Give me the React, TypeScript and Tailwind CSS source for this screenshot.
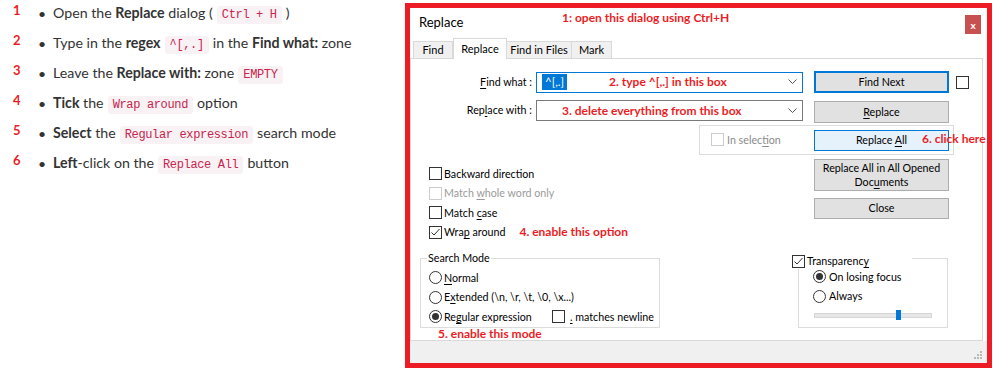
import React from "react";

const red = "font-['Lato',sans-serif] font-bold whitespace-nowrap text-[#ed1c24]";

const Code = ({ children }: { children: React.ReactNode }) => (
    <code className="mx-[4px] rounded-[3px] bg-[#f9f2f4] px-[5px] py-[2px] font-['Liberation_Mono',monospace] text-[12px] tracking-[-0.35px] text-[#c7254e]">
        {children}
    </code>
);

const U = ({ children }: { children: React.ReactNode }) => (
    <span className="underline underline-offset-[2px]">{children}</span>
);

const Check = ({ checked, disabled }: { checked?: boolean; disabled?: boolean }) => (
    <span
        className={
            disabled
                ? "flex h-[13px] w-[13px] shrink-0 border border-[#cccccc] bg-white"
                : "flex h-[13px] w-[13px] shrink-0 items-center justify-center border border-[#333333] bg-white"
        }
    >
        {checked && (
            <svg width="11" height="11" viewBox="0 0 11 11">
                <path d="M1.5 5.5 L4 8 L9.5 2" fill="none" stroke="#333333" strokeWidth="1" />
            </svg>
        )}
    </span>
);

const Radio = ({ checked }: { checked?: boolean }) => (
    <span className="flex h-[13px] w-[13px] shrink-0 items-center justify-center rounded-full border border-[#333333] bg-white">
        {checked && <span className="h-[7px] w-[7px] rounded-full bg-[#333333]" />}
    </span>
);

const Chevron = () => (
    <svg width="9" height="6" viewBox="0 0 9 6" className="ml-auto mr-[5px]">
        <path d="M0.5 0.5 L4.5 4.5 L8.5 0.5" fill="none" stroke="#555555" strokeWidth="1" />
    </svg>
);

const steps: React.ReactNode[] = [
    <>Open the <b>Replace</b> dialog (<Code>Ctrl + H</Code>)</>,
    <>Type in the <b>regex</b><Code>^[,.]</Code>in the <b>Find what:</b> zone</>,
    <>Leave the <b>Replace with:</b> zone<Code>EMPTY</Code></>,
    <><b>Tick</b> the<Code>Wrap around</Code>option</>,
    <><b>Select</b> the<Code>Regular expression</Code>search mode</>,
    <><b>Left</b>-click on the<Code>Replace All</Code>button</>,
];

const tabs = ["Find", "Replace", "Find in Files", "Mark"];

export default function App() {
    return (
        <div className="flex h-[373px] w-[1000px] items-start bg-white">
            {/* instructions */}
            <ul className="-mt-[2px] w-[405px] shrink-0 font-['Lato',sans-serif] text-[14.2px] text-[#333333]">
                {steps.map((s, i) => (
                    <li key={i} className="flex h-[30px] items-center">
                        <span className="-mt-[4px] w-[38px] pl-[13px] text-[13px] font-bold text-[#ed1c24]">{i + 1}</span>
                        <span className="w-[15px] text-[14px]">•</span>
                        <span className="whitespace-nowrap">{s}</span>
                    </li>
                ))}
            </ul>

            {/* dialog screenshot */}
            <div className="mt-[3px] h-[365px] w-[587px] shrink-0 whitespace-nowrap border-[5px] border-[#ed1c24] bg-white font-['Lato',sans-serif] text-[10.7px] text-black">
                <div className="flex h-[30px] items-start">
                    <div className="ml-[9px] mt-[6px] w-[143px] text-[13px] leading-[16px]">Replace</div>
                    <div className={`${red} mt-[3px] text-[12px] leading-[14px]`}>1: open this dialog using Ctrl+H</div>
                    <div className="ml-auto mr-[6px] mt-[7px] flex h-[19px] w-[16px] items-center justify-center bg-[#c75050] text-[10px] font-bold leading-none text-white">
                        x
                    </div>
                </div>

                <div className="flex h-[20px] items-end pl-[3px]">
                    {tabs.map((t) =>
                        t === "Replace" ? (
                            <div key={t} className="relative z-10 -mb-px flex h-[21px] w-[54px] items-center justify-center border border-b-0 border-[#d9d9d9] bg-white text-[11px]">
                                {t}
                            </div>
                        ) : (
                            <div
                                key={t}
                                className={`flex h-[17px] items-center justify-center border border-b-0 border-[#d9d9d9] bg-[#f0f0f0] text-[11px] ${
                                    t === "Find" ? "w-[40px]" : t === "Mark" ? "w-[40px] border-l-0" : "w-[65px] border-l-0"
                                }`}
                            >
                                {t}
                            </div>
                        )
                    )}
                </div>

                <div className="mr-[4px] h-[283px] border border-[#d9d9d9] bg-white">
                    {/* find what */}
                    <div className="mt-[12px] flex h-[22px] items-center">
                        <div className="w-[121px] text-right">
                            <U>F</U>ind what :
                        </div>
                        <div className="ml-[4px] flex h-[21px] w-[267px] items-center border border-[#0078d7] pl-[5px]">
                            <span className="bg-[#0078d7] px-[3px] text-[11.5px] leading-[16px] text-white">^[,.]</span>
                            <span className={`${red} ml-[42px] text-[12px]`}>2. type ^[,.] in this box</span>
                            <Chevron />
                        </div>
                        <div className="ml-[11px] flex h-[22px] w-[135px] items-center justify-center border-2 border-[#0078d7] bg-[#e1e1e1]">
                            Find Next
                        </div>
                        <div className="ml-[7px]">
                            <Check />
                        </div>
                    </div>

                    {/* replace with */}
                    <div className="mt-[7px] flex items-start">
                        <div className="flex h-[21px] w-[121px] items-center justify-end">
                            <span>
                                Rep<U>l</U>ace with :
                            </span>
                        </div>
                        <div className="ml-[4px] flex h-[21px] w-[267px] items-center border border-[#7a7a7a] pl-[25px]">
                            <span className={`${red} text-[12px]`}>3. delete everything from this box</span>
                            <Chevron />
                        </div>
                        <div className="ml-[11px] mt-[1px] flex h-[22px] w-[135px] items-center justify-center border border-[#adadad] bg-[#e1e1e1]">
                            <span>
                                <U>R</U>eplace
                            </span>
                        </div>
                    </div>

                    {/* in selection */}
                    <div className="relative ml-[288px] mt-[2px] flex h-[30px] w-[255px] items-center border border-[#dcdcdc]">
                        <div className="flex w-[114px] items-center gap-[3px] pl-[11px] text-[#8a8a8a]">
                            <Check disabled />
                            <span>
                                In selec<U>t</U>ion
                            </span>
                        </div>
                        <div className="flex h-[21px] w-[135px] items-center justify-center border border-[#0078d7] bg-[#e5f1fb]">
                            <span>
                                Replace <U>A</U>ll
                            </span>
                        </div>
                        <span className={`${red} absolute left-[222px] top-[6px] text-[12px] leading-[14px]`}>6. click here</span>
                    </div>

                    {/* options + side buttons */}
                    <div className="flex items-start">
                        <div className="ml-[18px] mt-[9px] w-[385px]">
                            <div className="flex h-[19.5px] items-center gap-[2px]">
                                <Check />
                                <span>Backward direction</span>
                            </div>
                            <div className="flex h-[19.5px] items-center gap-[2px] text-[#9a9a9a]">
                                <Check disabled />
                                <span>
                                    Match <U>w</U>hole word only
                                </span>
                            </div>
                            <div className="flex h-[19.5px] items-center gap-[2px]">
                                <Check />
                                <span>
                                    Match <U>c</U>ase
                                </span>
                            </div>
                            <div className="flex h-[19.5px] items-center gap-[2px]">
                                <Check checked />
                                <span>
                                    Wra<U>p</U> around
                                </span>
                                <span className={`${red} ml-[12px] text-[12px]`}>4. enable this option</span>
                            </div>
                        </div>
                        <div className="mt-[4px] flex flex-col">
                            <div className="flex h-[32px] w-[135px] flex-col items-center justify-center border border-[#adadad] bg-[#e1e1e1] text-center leading-[14px]">
                                <span>Replace All in All Opened</span>
                                <span>
                                    Doc<U>u</U>ments
                                </span>
                            </div>
                            <div className="mt-[7px] flex h-[21px] w-[135px] items-center justify-center border border-[#adadad] bg-[#e1e1e1]">
                                Close
                            </div>
                        </div>
                    </div>

                    {/* search mode + transparency */}
                    <div className="mt-[16px] flex items-start">
                        <div className="flex flex-col">
                            <div className="relative ml-[9px] h-[70px] w-[240px] border border-[#dcdcdc] pl-[8px] pt-[9px]">
                                <span className="absolute left-[6px] top-[-9px] bg-white px-[1px] leading-[16px]">Search Mode</span>
                                <div className="flex h-[19.5px] items-center gap-[2px]">
                                    <Radio />
                                    <span>
                                        <U>N</U>ormal
                                    </span>
                                </div>
                                <div className="flex h-[19.5px] items-center gap-[2px]">
                                    <Radio />
                                    <span>
                                        E<U>x</U>tended (\n, \r, \t, \0, \x...)
                                    </span>
                                </div>
                                <div className="flex h-[19.5px] items-center gap-[2px]">
                                    <Radio checked />
                                    <span className="w-[106px]">
                                        Re<U>g</U>ular expression
                                    </span>
                                    <Check />
                                    <span className="ml-[3px]">
                                        <U>.</U> matches newline
                                    </span>
                                </div>
                            </div>
                            <span className={`${red} ml-[27px] h-[12px] text-[12px] leading-[12px]`}>5. enable this mode</span>
                        </div>

                        <div className="relative ml-[138px] h-[70px] w-[150px] border border-[#dcdcdc] pl-[14px] pt-[8px]">
                            <div className="absolute left-[-7px] top-[-6px] flex w-[120px] items-center gap-[2px] bg-white">
                                <Check checked />
                                <span>
                                    Transparenc<U>y</U>
                                </span>
                            </div>
                            <div className="flex h-[19.5px] items-center gap-[3px]">
                                <Radio checked />
                                <span>On losing focus</span>
                            </div>
                            <div className="flex h-[19.5px] items-center gap-[3px]">
                                <Radio />
                                <span>Always</span>
                            </div>
                            <div className="relative mt-[4px] flex h-[10px] items-center pl-[1px]">
                                <div className="h-[5px] w-[118px] border border-[#d6d6d6] bg-[#e7e7e7]" />
                                <div className="absolute left-[83px] top-0 h-[10px] w-[5px] bg-[#0078d7]" />
                            </div>
                        </div>
                    </div>
                </div>

                <div className="flex h-[22px] items-end justify-end bg-[#f0f0f0] pb-[4px] pr-[5px]">
                    <svg width="8" height="8" viewBox="0 0 8 8">
                        <rect x="6" y="0" width="2" height="2" fill="#b8b8b8" />
                        <rect x="3" y="3" width="2" height="2" fill="#b8b8b8" />
                        <rect x="6" y="3" width="2" height="2" fill="#b8b8b8" />
                        <rect x="0" y="6" width="2" height="2" fill="#b8b8b8" />
                        <rect x="3" y="6" width="2" height="2" fill="#b8b8b8" />
                        <rect x="6" y="6" width="2" height="2" fill="#b8b8b8" />
                    </svg>
                </div>
            </div>
        </div>
    );
}
